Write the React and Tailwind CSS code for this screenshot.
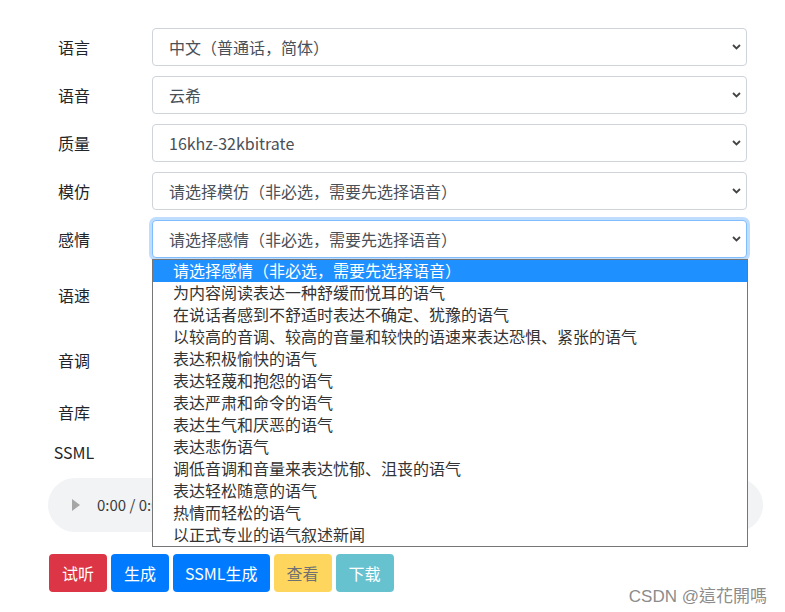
import React from "react";

const FONT = { fontFamily: '"Noto Sans CJK SC", "Noto Sans", sans-serif' };

function Chevron() {
  return (
    <svg className="absolute right-[5px] top-1/2 -translate-y-1/2" width="9" height="6" viewBox="0 0 9 6">
      <path d="M1 1 L4.5 4.5 L8 1" fill="none" stroke="#444" strokeWidth="1.8" />
    </svg>
  );
}

function SelectBox({ text, focused, children }) {
  return (
    <div className="relative flex-1 ml-[52px] mr-[16px]">
      <div
        className={
          "relative h-[38px] rounded-[4px] border bg-white flex items-center pl-[16px] text-[16px] text-[#495057] " +
          (focused
            ? "border-[#80bdff] shadow-[0_0_0_3px_rgba(0,123,255,0.25)]"
            : "border-[#ced4da]")
        }
      >
        <span>{text}</span>
        <Chevron />
      </div>
      {children}
    </div>
  );
}

function Row({ label, children, className = "" }) {
  return (
    <div className={"flex items-center " + className}>
      <div className="w-[52px] text-center text-[16px] text-[#212529] shrink-0">{label}</div>
      {children}
    </div>
  );
}

const options = [
  "请选择感情（非必选，需要先选择语音）",
  "为内容阅读表达一种舒缓而悦耳的语气",
  "在说话者感到不舒适时表达不确定、犹豫的语气",
  "以较高的音调、较高的音量和较快的语速来表达恐惧、紧张的语气",
  "表达积极愉快的语气",
  "表达轻蔑和抱怨的语气",
  "表达严肃和命令的语气",
  "表达生气和厌恶的语气",
  "表达悲伤语气",
  "调低音调和音量来表达忧郁、沮丧的语气",
  "表达轻松随意的语气",
  "热情而轻松的语气",
  "以正式专业的语气叙述新闻",
];

export default function App() {
  return (
    <div className="relative w-[785px] h-[612px] bg-white overflow-hidden" style={FONT}>
      <div className="pl-[48px] pr-[22px] pt-[28px] flex flex-col">
        <Row label="语言" className="mb-[10px]">
          <SelectBox text="中文（普通话，简体）" />
        </Row>
        <Row label="语音" className="mb-[10px]">
          <SelectBox text="云希" />
        </Row>
        <Row label="质量" className="mb-[10px]">
          <SelectBox text="16khz-32kbitrate" />
        </Row>
        <Row label="模仿" className="mb-[10px]">
          <SelectBox text="请选择模仿（非必选，需要先选择语音）" />
        </Row>
        <Row label="感情" className="relative z-10 mb-[10px]">
          <SelectBox text="请选择感情（非必选，需要先选择语音）" focused>
            <ul className="absolute left-0 right-[-1px] top-[39px] bg-white border border-[#767676] text-[16px] text-[#333]">
              {options.map((o, i) => (
                <li
                  key={i}
                  className={
                    "h-[22px] leading-[21px] pl-[20px] whitespace-nowrap " +
                    (i === 0 ? "bg-[#1e90ff] text-white" : "")
                  }
                >
                  {o}
                </li>
              ))}
            </ul>
          </SelectBox>
        </Row>
        <Row label="语速" className="h-[54px] mb-[10px]">
          <div className="flex-1 ml-[52px] mr-[16px]" />
        </Row>
        <Row label="音调" className="h-[56px] mb-[10px]">
          <div className="flex-1 ml-[52px] mr-[16px]" />
        </Row>
        <Row label="音库" className="h-[28px] mb-[10px]">
          <div className="flex-1 ml-[52px] mr-[16px]" />
        </Row>
        <div className="flex items-center h-[32px] mb-[10px]">
          <div className="w-[52px] text-center text-[16px] text-[#212529]">SSML</div>
        </div>
        <div className="h-[54px] rounded-full bg-[#f1f3f4] flex items-center pl-[24px]">
          <svg width="8" height="12" viewBox="0 0 8 12">
            <path d="M0 0 L8 6 L0 12 Z" fill="#a6a6a6" />
          </svg>
          <span className="ml-[17px] text-[15px] text-[#3c3c3c]">0:00 / 0:00</span>
        </div>
        <div className="flex gap-[4px] mt-[22px] ml-[1px]">
          <button className="h-[38px] px-[13px] rounded-[4px] bg-[#dc3545] text-white text-[16px]">试听</button>
          <button className="h-[38px] px-[13px] rounded-[4px] bg-[#007bff] text-white text-[16px]">生成</button>
          <button className="h-[38px] px-[12px] rounded-[4px] bg-[#007bff] text-white text-[16px]">SSML生成</button>
          <button className="h-[38px] px-[13px] rounded-[4px] bg-[#ffc107] text-[#212529] text-[16px] opacity-[0.65]">查看</button>
          <button className="h-[38px] px-[13px] rounded-[4px] bg-[#17a2b8] text-white text-[16px] opacity-[0.65]">下载</button>
        </div>
      </div>
      <div
        className="absolute right-[18px] top-[584px] text-[17px] text-[#8c8c8c]"
        style={{ fontFamily: '"Liberation Sans", "Noto Sans CJK TC", sans-serif' }}
      >
        CSDN @這花開嗎
      </div>
    </div>
  );
}
